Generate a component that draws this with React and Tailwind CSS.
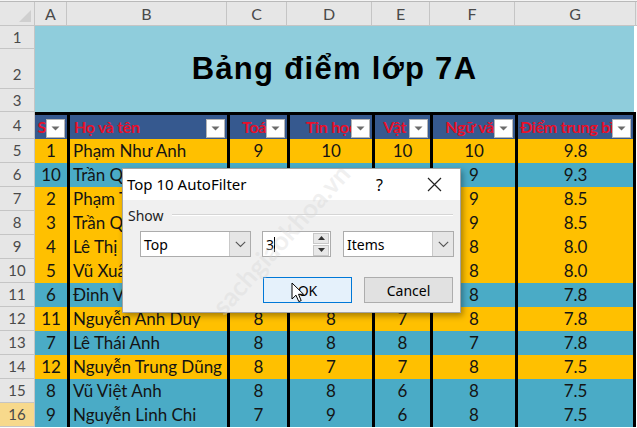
import React from 'react';

// column widths of the sheet: row header, A..G, trailing sliver
const cols = [
  { key: 'a', label: 'A', w: 'w-[32px]' },
  { key: 'b', label: 'B', w: 'w-[160px]' },
  { key: 'c', label: 'C', w: 'w-[60px]' },
  { key: 'd', label: 'D', w: 'w-[85px]' },
  { key: 'e', label: 'E', w: 'w-[58px]' },
  { key: 'f', label: 'F', w: 'w-[85px]' },
  { key: 'g', label: 'G', w: 'w-[121px]' },
];

const headers = ['STT', 'Họ và tên', 'Toán', 'Tin học', 'Vật lý', 'Ngữ văn', 'Điểm trung bình'];

const students = [
  { n: 5, a: '1', b: 'Phạm Như Anh', c: '9', d: '10', e: '10', f: '10', g: '9.8', tone: 'y' },
  { n: 6, a: '10', b: 'Trần Quang Huy', c: '9', d: '9', e: '10', f: '9', g: '9.3', tone: 't' },
  { n: 7, a: '2', b: 'Phạm Thu Hà', c: '8', d: '9', e: '8', f: '9', g: '8.5', tone: 'y' },
  { n: 8, a: '3', b: 'Trần Quốc Bảo', c: '9', d: '8', e: '8', f: '9', g: '8.5', tone: 'y' },
  { n: 9, a: '4', b: 'Lê Thị Hồng', c: '8', d: '8', e: '8', f: '8', g: '8.0', tone: 'y' },
  { n: 10, a: '5', b: 'Vũ Xuân Mai', c: '8', d: '8', e: '8', f: '8', g: '8.0', tone: 'y' },
  { n: 11, a: '6', b: 'Đinh Văn Nam', c: '8', d: '8', e: '7', f: '8', g: '7.8', tone: 't' },
  { n: 12, a: '11', b: 'Nguyễn Anh Duy', c: '8', d: '8', e: '7', f: '8', g: '7.8', tone: 'y' },
  { n: 13, a: '7', b: 'Lê Thái Anh', c: '8', d: '8', e: '8', f: '7', g: '7.8', tone: 't' },
  { n: 14, a: '12', b: 'Nguyễn Trung Dũng', c: '8', d: '7', e: '7', f: '8', g: '7.5', tone: 'y' },
  { n: 15, a: '8', b: 'Vũ Việt Anh', c: '8', d: '8', e: '6', f: '8', g: '7.5', tone: 't' },
  { n: 16, a: '9', b: 'Nguyễn Linh Chi', c: '7', d: '9', e: '6', f: '8', g: '7.5', tone: 't' },
];

const RowHead = ({ children, h, active }) => (
  <div
    className={`w-[35px] ${h} shrink-0 flex items-center justify-center border-r border-b border-[#c5c5c5] text-[15px] text-[#4a4a4a] ${
      active ? 'bg-[#f7d98c]' : 'bg-[#e6e6e6]'
    }`}
  >
    {children}
  </div>
);

const FilterButton = () => (
  <div className="absolute right-[2px] top-[4px] w-[19px] h-[19px] bg-white border border-[#b5b5b5] flex items-center justify-center">
    <svg width="9" height="5" viewBox="0 0 9 5">
      <path d="M0.5 0.5 L8.5 0.5 L4.5 4.5 Z" fill="#6b6b6b" />
    </svg>
  </div>
);

const Chevron = () => (
  <svg width="11" height="7" viewBox="0 0 11 7">
    <path d="M0.8 0.8 L5.5 5.5 L10.2 0.8" fill="none" stroke="#555" strokeWidth="1.1" />
  </svg>
);

const Combo = ({ value, w }) => (
  <div className={`${w} h-[26px] flex bg-white border border-[#acacac]`}>
    <div className="flex-1 flex items-center pl-[3px] text-[14px] text-black">{value}</div>
    <div className="w-[21px] bg-[#e6e6e6] border-l border-[#c9c9c9] flex items-center justify-center">
      <Chevron />
    </div>
  </div>
);

const Dialog = () => (
  <div
    className="absolute left-[122px] top-[168px] w-[339px] h-[145px] border border-[#a4a4a4] bg-[#f0f0f0] shadow-[2px_3px_6px_rgba(0,0,0,0.35)]"
    style={{ fontFamily: '"Noto Sans", sans-serif' }}
  >
    <div className="h-[31px] bg-white flex items-center pl-[4px] text-[15px] text-black">
      <span>Top 10 AutoFilter</span>
      <span className="ml-auto mr-[44px] text-[16px]">?</span>
      <svg className="mr-[18px]" width="15" height="15" viewBox="0 0 15 15">
        <path d="M1 1 L14 14 M14 1 L1 14" stroke="#222" strokeWidth="1.2" />
      </svg>
    </div>
    <div className="px-[5px] pt-[7px]">
      <div className="flex items-center h-[16px] text-[14px] text-[#222]">
        <span>Show</span>
        <div className="flex-1 ml-[8px] mr-[2px] h-[2px] border-t border-[#d5d5d5] border-b border-b-white" />
      </div>
      <div className="flex mt-[8px] ml-[12px] gap-[11px]">
        <Combo value="Top" w="w-[111px]" />
        <div className="w-[69px] h-[26px] flex bg-white border border-[#acacac]">
          <div className="flex-1 flex items-center pl-[3px] text-[14px] text-black">
            3<span className="w-px h-[15px] bg-black" />
          </div>
          <div className="w-[17px] flex flex-col justify-center gap-[1px] pr-[1px]">
            <div className="h-[11px] bg-[#e8e8e8] border border-[#c8c8c8] flex items-center justify-center">
              <svg width="7" height="4" viewBox="0 0 7 4"><path d="M0 4 L3.5 0 L7 4 Z" fill="#333" /></svg>
            </div>
            <div className="h-[11px] bg-[#e8e8e8] border border-[#c8c8c8] flex items-center justify-center">
              <svg width="7" height="4" viewBox="0 0 7 4"><path d="M0 0 L3.5 4 L7 0 Z" fill="#333" /></svg>
            </div>
          </div>
        </div>
        <div className="ml-[1px]">
          <Combo value="Items" w="w-[111px]" />
        </div>
      </div>
      <div className="flex justify-end gap-[12px] mt-[20px] pr-[2px]">
        <div className="w-[89px] h-[26px] bg-[#e5f1fb] border border-[#0078d7] flex items-center justify-center text-[14px] text-black">
          OK
        </div>
        <div className="w-[89px] h-[26px] bg-[#e1e1e1] border border-[#adadad] flex items-center justify-center text-[14px] text-black">
          Cancel
        </div>
      </div>
    </div>
  </div>
);

const Cursor = () => (
  <svg className="absolute left-[291px] top-[282px]" width="14" height="22" viewBox="0 0 14 22">
    <path
      d="M1 1 L1 17 L5 13.2 L7.8 19.6 L10.2 18.6 L7.5 12.3 L12.6 12.3 Z"
      fill="white"
      stroke="black"
      strokeWidth="1"
      strokeLinejoin="miter"
    />
  </svg>
);

export default function App() {
  return (
    <div
      className="relative w-[637px] h-[428px] overflow-hidden bg-white"
      style={{ fontFamily: 'Lato, "Noto Sans", sans-serif' }}
    >
      <div className="h-[2px] bg-[#f4f4f4] border-b border-[#b9b9b9]" />

      {/* column letters */}
      <div className="flex h-[24px]">
        <div className="w-[35px] shrink-0 bg-[#e6e6e6] border-r border-b border-[#c5c5c5] relative">
          <svg className="absolute right-[3px] bottom-[3px]" width="12" height="12" viewBox="0 0 12 12">
            <path d="M12 0 L12 12 L0 12 Z" fill="#cfcfcf" />
          </svg>
        </div>
        {cols.map((c) => (
          <div
            key={c.key}
            className={`${c.w} shrink-0 bg-[#e6e6e6] border-r border-b border-[#c5c5c5] flex items-center justify-center text-[16px] text-[#4a4a4a]`}
          >
            {c.label}
          </div>
        ))}
        <div className="flex-1 bg-[#e6e6e6] border-b border-[#c5c5c5]" />
      </div>

      {/* title block, rows 1-3 merged */}
      <div className="flex">
        <div className="flex flex-col">
          <RowHead h="h-[23px]">1</RowHead>
          <RowHead h="h-[40px]">
            <span className="mt-[12px]">2</span>
          </RowHead>
          <RowHead h="h-[23px]">3</RowHead>
        </div>
        <div
          className="w-[599px] h-[86px] bg-[#8fcddc] flex items-center justify-center pt-[1px]"
          style={{ fontFamily: '"Liberation Sans", Arial, sans-serif' }}
        >
          <span className="text-[31px] font-bold tracking-[1.3px] text-black">Bảng điểm lớp 7A</span>
        </div>
      </div>

      {/* filter header row */}
      <div className="flex h-[27px]">
        <RowHead h="h-[27px]">4</RowHead>
        {cols.map((c, i) => (
          <div
            key={c.key}
            className={`${c.w} shrink-0 relative bg-[#36598f] border-t-[3px] border-black overflow-hidden flex items-center ${
              i === 1 ? 'justify-start pl-[4px]' : 'justify-center'
            } ${i > 0 ? 'border-l-[3px]' : ''} ${i === 6 ? 'border-r-[3px]' : ''}`}
          >
            <span className="whitespace-nowrap text-[16px] font-bold text-[#e8102a] tracking-[-0.3px]">
              {headers[i]}
            </span>
            <FilterButton />
          </div>
        ))}
      </div>

      {/* data rows */}
      {students.map((s) => (
        <div key={s.n} className="flex h-[24px]">
          <RowHead h="h-[24px]" active={s.n === 16}>
            {s.n}
          </RowHead>
          {cols.map((c, i) => (
            <div
              key={c.key}
              className={`${c.w} shrink-0 overflow-hidden flex items-center text-[17px] text-[#141414] whitespace-nowrap ${
                s.tone === 'y' ? 'bg-[#ffc000]' : 'bg-[#4aabc6]'
              } ${i === 1 ? 'justify-start pl-[3px]' : 'justify-center'} ${i > 0 ? 'border-l-[3px] border-black' : ''} ${
                i === 6 ? 'border-r-[3px] border-black' : ''
              }`}
            >
              {s[c.key]}
            </div>
          ))}
        </div>
      ))}

      <Dialog />
      <Cursor />

      {/* watermark */}
      <div
        className="absolute left-[166px] top-[220px] w-[230px] text-center text-[26px] font-bold text-[#d4d4d4]/35 -rotate-[48deg] pointer-events-none whitespace-nowrap"
        style={{ fontFamily: 'Lato, sans-serif' }}
      >
        sachgiaokhoa.vn
      </div>
    </div>
  );
}
